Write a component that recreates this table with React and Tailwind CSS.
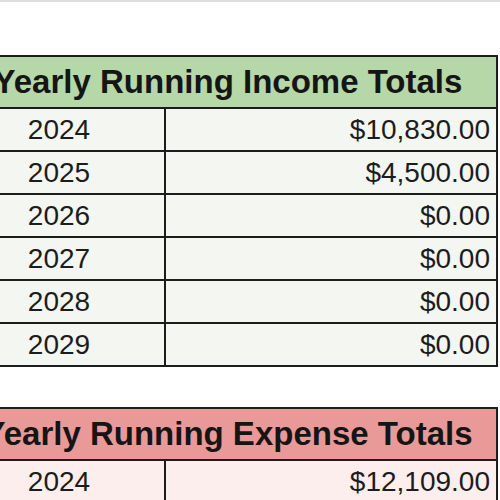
import React from 'react'

const income = [
  { year: '2024', total: '$10,830.00' },
  { year: '2025', total: '$4,500.00' },
  { year: '2026', total: '$0.00' },
  { year: '2027', total: '$0.00' },
  { year: '2028', total: '$0.00' },
  { year: '2029', total: '$0.00' },
]

const expense = [
  { year: '2024', total: '$12,109.00' },
]

const TotalsTable = ({ title, rows, headerClass, rowClass, className = '' }) => (
  <div className={`w-[540px] -ml-[42px] border-2 border-[#1c1c1c] ${className}`}>
    <div className={`h-[52px] flex items-center justify-center whitespace-nowrap border-b-2 border-[#1c1c1c] text-[33px] font-bold text-[#151515] ${headerClass}`}>
      {title}
    </div>
    {rows.map((row, i) => (
      <div
        key={row.year}
        className={`grid grid-cols-[204px_1fr] text-[28px] text-[#1c1c1c] ${rowClass} ${
          i < rows.length - 1 ? 'h-[43px] border-b-2 border-[#1c1c1c]' : 'h-[41px]'
        }`}
      >
        <div className="flex items-center justify-center pr-[6px]">{row.year}</div>
        <div className="flex items-center justify-end pr-[6px] border-l-2 border-[#1c1c1c]">{row.total}</div>
      </div>
    ))}
  </div>
)

export default function App() {
  return (
    <div className="w-[500px] h-[500px] overflow-hidden bg-white border-t-2 border-[#dedede] font-['Liberation_Sans',Arial,sans-serif]">
      <TotalsTable
        title="Yearly Running Income Totals"
        rows={income}
        headerClass="bg-[#b6d7a8]"
        rowClass="bg-[#f4f6f1]"
        className="mt-[53px]"
      />
      <TotalsTable
        title="Yearly Running Expense Totals"
        rows={expense}
        headerClass="bg-[#ea9999]"
        rowClass="bg-[#fdeeee]"
        className="mt-[40px]"
      />
    </div>
  )
}
